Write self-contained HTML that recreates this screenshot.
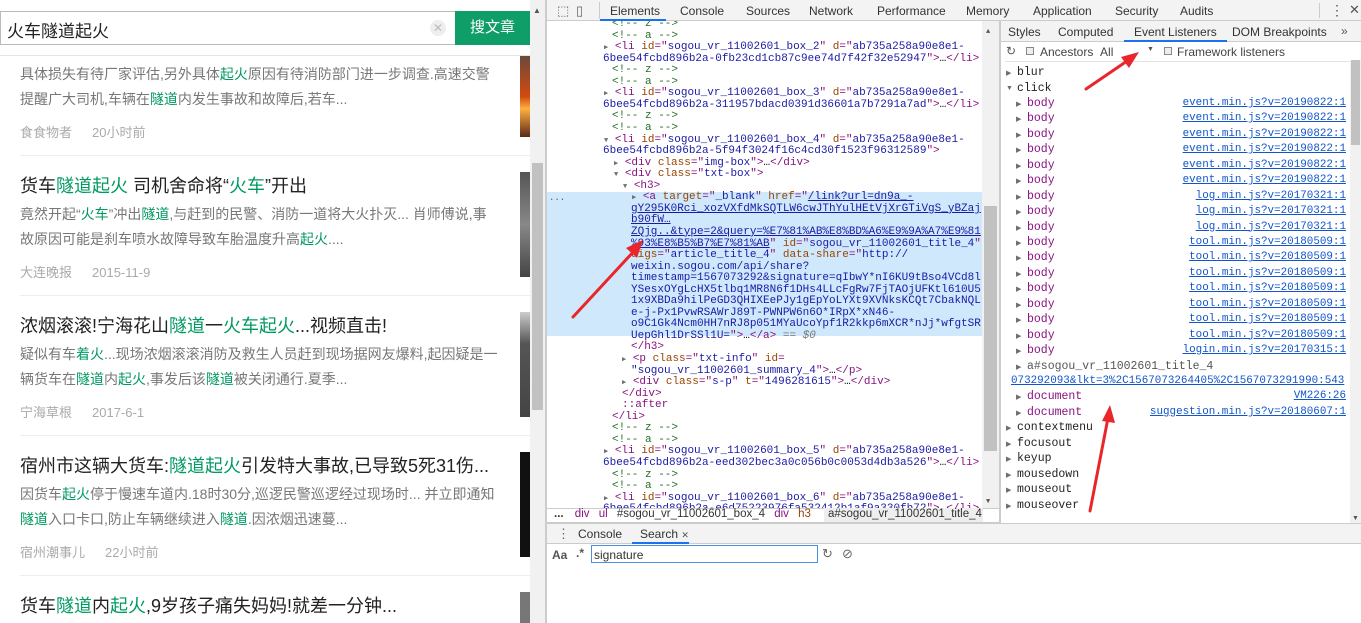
<!DOCTYPE html>
<html><head><meta charset="utf-8"><style>
*{margin:0;padding:0;box-sizing:border-box}
body{width:1361px;height:623px;overflow:hidden;background:#fff;position:relative;font-family:"Liberation Sans","Noto Sans CJK SC",sans-serif}
.a{position:absolute;white-space:nowrap}
.g{color:#009a61}
.m{font-family:"Liberation Mono","DejaVu Sans Mono",monospace}
.ui{font-family:"Liberation Sans",sans-serif;font-size:12px;color:#333}
.c{color:#236e25}.t{color:#881280}.n{color:#994500}.v{color:#1a1aa6}.p{color:#a894a6}
.u{text-decoration:underline;color:#1a1aa6}
.el .a{font-size:11px;line-height:11px}
.tri{font-size:7px;color:#6e6e6e}
.lk{color:#1155cc;text-decoration:underline}
.d{font-size:14px;color:#777;line-height:25px}
</style></head><body>
<!-- left page -->
<div class="a" style="left:0;top:0;width:545px;height:623px;background:#fff;overflow:hidden">
 <div class="a" style="left:0;top:11px;width:456px;height:34px;border:1px solid #bbb;border-right:none;background:#fff"></div>
 <div class="a" style="left:7px;top:17px;font-size:17px;color:#222">火车隧道起火</div>
 <div class="a" style="left:430px;top:20px;width:16px;height:16px;border-radius:8px;background:#eee;color:#bbb;font-size:12px;text-align:center;line-height:16px">✕</div>
 <div class="a" style="left:455px;top:11px;width:75px;height:34px;background:#0f9d68;color:#fff;font-size:15px;text-align:center;line-height:34px">搜文章</div>
 <div class="a" style="left:0;top:55px;width:530px;height:1px;background:#e4e4e4"></div>

 <div class="a d" style="left:20px;top:62px">具体损失有待厂家评估,另外具体<span class="g">起火</span>原因有待消防部门进一步调查.高速交警<br>提醒广大司机,车辆在<span class="g">隧道</span>内发生事故和故障后,若车...</div>
 <div class="a" style="left:20px;top:122px;font-size:13px;color:#aaa">食食物者<span style="margin-left:20px">20小时前</span></div>
 <div class="a" style="left:20px;top:155px;width:510px;height:1px;background:#eee"></div>
 <div class="a" style="left:520px;top:56px;width:10px;height:81px;background:linear-gradient(#6b4a3a,#d24a10 50%,#ffb040 65%,#5a2a1a)"></div>

 <div class="a" style="left:20px;top:172px;font-size:18px;color:#222">货车<span class="g">隧道起火</span> 司机舍命将“<span class="g">火车</span>”开出</div>
 <div class="a d" style="left:20px;top:202px">竟然开起“<span class="g">火车</span>”冲出<span class="g">隧道</span>,与赶到的民警、消防一道将大火扑灭... 肖师傅说,事<br>故原因可能是刹车喷水故障导致车胎温度升高<span class="g">起火</span>....</div>
 <div class="a" style="left:20px;top:262px;font-size:13px;color:#aaa">大连晚报<span style="margin-left:20px">2015-11-9</span></div>
 <div class="a" style="left:20px;top:295px;width:510px;height:1px;background:#eee"></div>
 <div class="a" style="left:520px;top:172px;width:10px;height:105px;background:linear-gradient(#555,#888,#444)"></div>

 <div class="a" style="left:20px;top:312px;font-size:18px;color:#222">浓烟滚滚!宁海花山<span class="g">隧道</span>一<span class="g">火车起火</span>...视频直击!</div>
 <div class="a d" style="left:20px;top:342px">疑似有车<span class="g">着火</span>...现场浓烟滚滚消防及救生人员赶到现场据网友爆料,起因疑是一<br>辆货车在<span class="g">隧道</span>内<span class="g">起火</span>,事发后该<span class="g">隧道</span>被关闭通行.夏季...</div>
 <div class="a" style="left:20px;top:402px;font-size:13px;color:#aaa">宁海草根<span style="margin-left:20px">2017-6-1</span></div>
 <div class="a" style="left:20px;top:435px;width:510px;height:1px;background:#eee"></div>
 <div class="a" style="left:520px;top:312px;width:10px;height:105px;background:linear-gradient(#ccc,#555 30%,#444)"></div>

 <div class="a" style="left:20px;top:452px;font-size:18px;color:#222">宿州市这辆大货车:<span class="g">隧道起火</span>引发特大事故,已导致5死31伤...</div>
 <div class="a d" style="left:20px;top:482px">因货车<span class="g">起火</span>停于慢速车道内.18时30分,巡逻民警巡逻经过现场时... 并立即通知<br><span class="g">隧道</span>入口卡口,防止车辆继续进入<span class="g">隧道</span>.因浓烟迅速蔓...</div>
 <div class="a" style="left:20px;top:542px;font-size:13px;color:#aaa">宿州潮事儿<span style="margin-left:20px">22小时前</span></div>
 <div class="a" style="left:20px;top:575px;width:510px;height:1px;background:#eee"></div>
 <div class="a" style="left:520px;top:452px;width:10px;height:105px;background:#111"></div>

 <div class="a" style="left:20px;top:592px;font-size:18px;color:#222">货车<span class="g">隧道</span>内<span class="g">起火</span>,9岁孩子痛失妈妈!就差一分钟...</div>
 <div class="a" style="left:520px;top:592px;width:10px;height:31px;background:#777"></div>

 <div class="a" style="left:530px;top:0;width:15px;height:623px;background:#f1f1f1"></div>
 <div class="a" style="left:532px;top:163px;width:11px;height:247px;background:#c1c1c1"></div>
 <div class="a" style="left:533px;top:6px;font-size:8px;color:#555">▲</div>
</div>
<div class="a" style="left:545px;top:0;width:2px;height:623px;background:#ccc"></div>

<!-- devtools top bar -->
<div class="a" style="left:547px;top:0;width:814px;height:21px;background:#f3f3f3;border-bottom:1px solid #ccc"></div>
<div class="a ui" style="left:557px;top:3px;font-size:13px;color:#666">⬚</div>
<div class="a ui" style="left:576px;top:3px;font-size:13px;color:#666">▯</div>
<div class="a" style="left:599px;top:2px;width:1px;height:17px;background:#ccc"></div>
<div class="a ui" style="top:4px;left:610px">Elements</div>
<div class="a" style="left:600px;top:19px;width:66px;height:2px;background:#1a73e8"></div>
<div class="a ui" style="top:4px;left:680px">Console</div>
<div class="a ui" style="top:4px;left:746px">Sources</div>
<div class="a ui" style="top:4px;left:809px">Network</div>
<div class="a ui" style="top:4px;left:877px">Performance</div>
<div class="a ui" style="top:4px;left:966px">Memory</div>
<div class="a ui" style="top:4px;left:1033px">Application</div>
<div class="a ui" style="top:4px;left:1115px">Security</div>
<div class="a ui" style="top:4px;left:1180px">Audits</div>
<div class="a" style="left:1319px;top:3px;width:1px;height:15px;background:#ccc"></div>
<div class="a ui" style="top:2px;left:1330px;font-size:14px;color:#555">⋮</div>
<div class="a ui" style="top:2px;left:1349px;font-size:13px;color:#555">✕</div>

<!-- elements panel -->
<div class="a el m" style="left:547px;top:21px;width:452px;height:487px;overflow:hidden;background:#fff">
 <div class="a" style="left:0;top:171px;width:435px;height:144px;background:#cfe8fc"></div>
 <div class="a" style="left:2px;top:172px;font-size:9px;color:#555">...</div>
 <div class="a" style="left:435px;top:0;width:17px;height:487px;background:#f1f1f1"></div>
 <div class="a" style="left:437px;top:185px;width:13px;height:245px;background:#c1c1c1"></div>
 <div class="a" style="left:439px;top:6px;font-size:7px;color:#555">▲</div>
 <div class="a" style="left:439px;top:476px;font-size:7px;color:#555">▼</div>
 <div id="code"></div>
</div>
<script>
var L=[
[65,'<span class="c">&lt;!-- z --&gt;</span>'],
[65,'<span class="c">&lt;!-- a --&gt;</span>'],
[57,'<span class="tri">▶</span> <span class="t">&lt;li</span> <span class="n">id</span><span class="t">="</span><span class="v">sogou_vr_11002601_box_2</span><span class="t">"</span> <span class="n">d</span><span class="t">="</span><span class="v">ab735a258a90e8e1-</span>'],
[56,'<span class="v">6bee54fcbd896b2a-0fb23cd1cb87c9ee74d7f42f32e52947</span><span class="t">"&gt;</span>…<span class="t">&lt;/li&gt;</span>'],
[65,'<span class="c">&lt;!-- z --&gt;</span>'],
[65,'<span class="c">&lt;!-- a --&gt;</span>'],
[57,'<span class="tri">▶</span> <span class="t">&lt;li</span> <span class="n">id</span><span class="t">="</span><span class="v">sogou_vr_11002601_box_3</span><span class="t">"</span> <span class="n">d</span><span class="t">="</span><span class="v">ab735a258a90e8e1-</span>'],
[56,'<span class="v">6bee54fcbd896b2a-311957bdacd0391d36601a7b7291a7ad</span><span class="t">"&gt;</span>…<span class="t">&lt;/li&gt;</span>'],
[65,'<span class="c">&lt;!-- z --&gt;</span>'],
[65,'<span class="c">&lt;!-- a --&gt;</span>'],
[57,'<span class="tri">▼</span> <span class="t">&lt;li</span> <span class="n">id</span><span class="t">="</span><span class="v">sogou_vr_11002601_box_4</span><span class="t">"</span> <span class="n">d</span><span class="t">="</span><span class="v">ab735a258a90e8e1-</span>'],
[56,'<span class="v">6bee54fcbd896b2a-5f94f3024f16c4cd30f1523f96312589</span><span class="t">"&gt;</span>'],
[67,'<span class="tri">▶</span> <span class="t">&lt;div</span> <span class="n">class</span><span class="t">="</span><span class="v">img-box</span><span class="t">"&gt;</span>…<span class="t">&lt;/div&gt;</span>'],
[67,'<span class="tri">▼</span> <span class="t">&lt;div</span> <span class="n">class</span><span class="t">="</span><span class="v">txt-box</span><span class="t">"&gt;</span>'],
[76,'<span class="tri">▼</span> <span class="t">&lt;h3&gt;</span>'],
[85,'<span class="tri">▶</span> <span class="t">&lt;a</span> <span class="n">target</span><span class="t">="</span><span class="v">_blank</span><span class="t">"</span> <span class="n">href</span><span class="t">="</span><span class="u">/link?url=dn9a_-</span>'],
[84,'<span class="u">gY295K0Rci_xozVXfdMkSQTLW6cwJThYulHEtVjXrGTiVgS_yBZaj</span>'],
[84,'<span class="u">b90fW…</span>'],
[84,'<span class="u">ZQjg..&amp;type=2&amp;query=%E7%81%AB%E8%BD%A6%E9%9A%A7%E9%81</span>'],
[84,'<span class="u">%93%E8%B5%B7%E7%81%AB</span><span class="t">"</span> <span class="n">id</span><span class="t">="</span><span class="v">sogou_vr_11002601_title_4</span><span class="t">"</span>'],
[84,'<span class="n">uigs</span><span class="t">="</span><span class="v">article_title_4</span><span class="t">"</span> <span class="n">data-share</span><span class="t">="</span><span class="v">http://</span>'],
[84,'<span class="v">weixin.sogou.com/api/share?</span>'],
[84,'<span class="v">timestamp=1567073292&amp;signature=qIbwY*nI6KU9tBso4VCd8l</span>'],
[84,'<span class="v">YSesxOYgLcHX5tlbq1MR8N6f1DHs4LLcFgRw7FjTAOjUFKtl610U5</span>'],
[84,'<span class="v">1x9XBDa9hilPeGD3QHIXEePJy1gEpYoLYXt9XVNksKCQt7CbakNQL</span>'],
[84,'<span class="v">e-j-Px1PvwRSAWrJ89T-PWNPW6n6O*IRpX*xN46-</span>'],
[84,'<span class="v">o9C1Gk4Ncm0HH7nRJ8p051MYaUcoYpf1R2kkp6mXCR*nJj*wfgtSR</span>'],
[84,'<span class="v">UepGhl1DrSSl1U=</span><span class="t">"&gt;</span>…<span class="t">&lt;/a&gt;</span> <span style="color:#777">== <i>$0</i></span>'],
[84,'<span class="t">&lt;/h3&gt;</span>'],
[75,'<span class="tri">▶</span> <span class="t">&lt;p</span> <span class="n">class</span><span class="t">="</span><span class="v">txt-info</span><span class="t">"</span> <span class="n">id</span><span class="t">=</span>'],
[84,'<span class="v">"sogou_vr_11002601_summary_4</span><span class="t">"&gt;</span>…<span class="t">&lt;/p&gt;</span>'],
[75,'<span class="tri">▶</span> <span class="t">&lt;div</span> <span class="n">class</span><span class="t">="</span><span class="v">s-p</span><span class="t">"</span> <span class="n">t</span><span class="t">="</span><span class="v">1496281615</span><span class="t">"&gt;</span>…<span class="t">&lt;/div&gt;</span>'],
[75,'<span class="t">&lt;/div&gt;</span>'],
[75,'<span class="t">::after</span>'],
[65,'<span class="t">&lt;/li&gt;</span>'],
[65,'<span class="c">&lt;!-- z --&gt;</span>'],
[65,'<span class="c">&lt;!-- a --&gt;</span>'],
[57,'<span class="tri">▶</span> <span class="t">&lt;li</span> <span class="n">id</span><span class="t">="</span><span class="v">sogou_vr_11002601_box_5</span><span class="t">"</span> <span class="n">d</span><span class="t">="</span><span class="v">ab735a258a90e8e1-</span>'],
[56,'<span class="v">6bee54fcbd896b2a-eed302bec3a0c056b0c0053d4db3a526</span><span class="t">"&gt;</span>…<span class="t">&lt;/li&gt;</span>'],
[65,'<span class="c">&lt;!-- z --&gt;</span>'],
[65,'<span class="c">&lt;!-- a --&gt;</span>'],
[57,'<span class="tri">▶</span> <span class="t">&lt;li</span> <span class="n">id</span><span class="t">="</span><span class="v">sogou_vr_11002601_box_6</span><span class="t">"</span> <span class="n">d</span><span class="t">="</span><span class="v">ab735a258a90e8e1-</span>'],
[56,'<span class="v">6bee54fcbd896b2a-e6d75223976fa532412b1af9a330fb72</span><span class="t">"&gt;</span>…<span class="t">&lt;/li&gt;</span>']
];
var h='';for(var i=0;i<L.length;i++){h+='<div class="a" style="left:'+L[i][0]+'px;top:'+(-2+i*11.55).toFixed(1)+'px">'+L[i][1]+'</div>';}
document.getElementById('code').innerHTML=h;
</script>

<!-- breadcrumb -->
<div class="a" style="left:547px;top:508px;width:452px;height:14px;background:#fff;border-top:1px solid #ccc"></div>
<div class="a ui" style="left:554px;top:508px;font-size:11.5px"><b>...</b> <span class="t" style="margin-left:8px">div</span> <span class="t" style="margin-left:6px">ul</span> <span style="margin-left:6px">#sogou_vr_11002601_box_4</span> <span class="t" style="margin-left:6px">div</span> <span class="n" style="margin-left:6px">h3</span></div>
<div class="a ui" style="left:824px;top:508px;width:159px;height:14px;background:#eee;font-size:11.5px;padding-left:4px">a#sogou_vr_11002601_title_4</div>
<div class="a" style="left:547px;top:522px;width:452px;height:1px;background:#ccc"></div>

<!-- drawer -->
<div class="a" style="left:547px;top:523px;width:814px;height:21px;background:#f3f3f3;border-bottom:1px solid #ccc;border-top:1px solid #ccc"></div>
<div class="a ui" style="left:557px;top:526px;font-size:13px;color:#666">⋮</div>
<div class="a ui" style="left:578px;top:527px">Console</div>
<div class="a ui" style="left:640px;top:527px">Search <span style="font-size:9px;color:#555">✕</span></div>
<div class="a" style="left:632px;top:542px;width:57px;height:2px;background:#1a73e8"></div>
<div class="a ui" style="left:552px;top:548px;font-weight:bold;color:#555">Aa</div>
<div class="a ui" style="left:576px;top:546px;font-weight:bold;color:#555">.*</div>
<div class="a" style="left:591px;top:545px;width:227px;height:18px;border:1px solid #4a90e2;background:#fff"></div>
<div class="a ui" style="left:594px;top:548px">signature</div>
<div class="a ui" style="left:822px;top:546px;color:#666;font-size:13px">↻</div>
<div class="a ui" style="left:842px;top:546px;color:#666;font-size:13px">⊘</div>

<!-- sidebar -->
<div class="a" style="left:999px;top:21px;width:2px;height:502px;background:#ccc"></div>
<div class="a" style="left:1001px;top:21px;width:360px;height:21px;background:#f3f3f3;border-bottom:1px solid #ccc"></div>
<div class="a ui" style="left:1008px;top:25px">Styles</div>
<div class="a ui" style="left:1058px;top:25px">Computed</div>
<div class="a ui" style="left:1134px;top:25px">Event Listeners</div>
<div class="a" style="left:1124px;top:40px;width:103px;height:2px;background:#1a73e8"></div>
<div class="a ui" style="left:1232px;top:25px">DOM Breakpoints</div>
<div class="a ui" style="left:1341px;top:24px;color:#555">»</div>
<div class="a ui" style="left:1006px;top:44px;color:#555;font-size:12px">↻</div>
<div class="a" style="left:1026px;top:47px;width:8px;height:8px;border:1px solid #888;background:#eee"></div>
<div class="a ui" style="left:1040px;top:45px;color:#444">Ancestors&nbsp;&nbsp;All</div>
<div class="a ui" style="left:1147px;top:46px;font-size:7px;color:#555">▼</div>
<div class="a" style="left:1164px;top:47px;width:8px;height:8px;border:1px solid #888;background:#eee"></div>
<div class="a ui" style="left:1177px;top:45px;color:#444">Framework listeners</div>
<div class="a" style="left:1005px;top:61px;width:345px;height:1px;background:#e3e3e3"></div>
<div class="a" style="left:1350px;top:60px;width:11px;height:463px;background:#f1f1f1"></div>
<div class="a" style="left:1351px;top:60px;width:9px;height:85px;background:#c1c1c1"></div>
<div id="ev" class="m"></div>
<script>
var R=[[0,'▶','blur','',0],[0,'▼','click','',0]];
var f=function(n,s){for(var i=0;i<n;i++)R.push([1,'▶','body',s,1]);};
f(6,'event.min.js?v=20190822:1');f(3,'log.min.js?v=20170321:1');f(7,'tool.min.js?v=20180509:1');f(1,'login.min.js?v=20170315:1');
R.push([1,'▶','a#sogou_vr_11002601_title_4','',2]);
R.push([-1,'','','073292093&amp;lkt=3%2C1567073264405%2C1567073291990:543',0]);
R.push([1,'▶','document','VM226:26',1]);R.push([1,'▶','document','suggestion.min.js?v=20180607:1',1]);
['contextmenu','focusout','keyup','mousedown','mouseout','mouseover'].forEach(function(x){R.push([0,'▶',x,'',0]);});
var h='';
for(var i=0;i<R.length;i++){var r=R[i],y=(66+i*15.45).toFixed(1);
 var col=r[4]==1?'#881280':(r[4]==2?'#555':'#222');
 if(r[0]>=0){h+='<div class="a" style="left:'+(1006+r[0]*10)+'px;top:'+(+y+3)+'px;font-size:7px;color:#6e6e6e;font-family:Liberation Sans">'+r[1]+'</div>';
 h+='<div class="a" style="left:'+(1017+r[0]*10)+'px;top:'+y+'px;font-size:11.5px;color:'+col+'">'+r[2]+'</div>';}
 if(r[3]){h+='<div class="a lk" style="'+(r[0]<0?'left:1011px;':'right:15px;')+'top:'+y+'px;font-size:10.9px">'+r[3]+'</div>';}
}
document.getElementById('ev').innerHTML=h;
</script>
<div class="a" style="left:1352px;top:515px;font-size:7px;color:#555">▼</div>

<!-- arrows -->
<svg class="a" style="left:0;top:0" width="1361" height="623">
<g stroke="#e8262b" stroke-width="3" fill="#e8262b" stroke-linecap="round">
<line x1="573" y1="317" x2="635" y2="250"/><polygon points="643,240 626,248 637,258" stroke="none"/>
<line x1="1086" y1="89" x2="1130" y2="59"/><polygon points="1139,52 1121,57 1129,68" stroke="none"/>
<line x1="1090" y1="511" x2="1108" y2="418"/><polygon points="1110,405 1102,421 1115,423" stroke="none"/>
</g></svg>
</body></html>
